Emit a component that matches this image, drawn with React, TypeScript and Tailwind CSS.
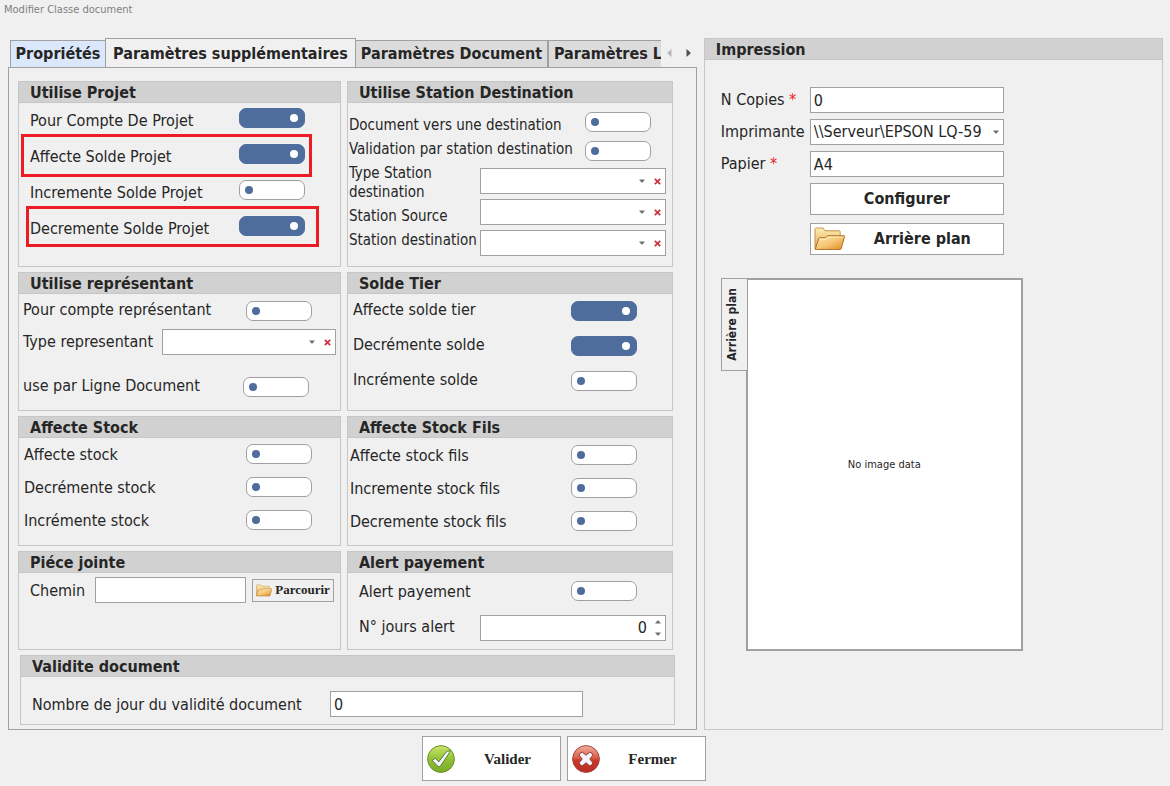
import { useId, useState } from 'react';
import type { ReactNode } from 'react';
import clsx from 'clsx';

type GroupProps = {
  title: string;
  className?: string;
  bodyClassName?: string;
  children: ReactNode;
};

function Group({ title, className, bodyClassName, children }: GroupProps) {
  return (
    <section className={clsx('flex min-w-0 flex-col border border-[#c6c6c6]', className)}>
      <h2 className="h-[21px] border-b border-[#c6c6c6] bg-[#d1d1d1] pl-[11px] text-base leading-[22px] font-bold whitespace-nowrap">
        {title}
      </h2>
      <div className={clsx('flex flex-1 flex-col', bodyClassName)}>{children}</div>
    </section>
  );
}

function Toggle({ id, on = false }: { id: string; on?: boolean }) {
  return (
    <input
      id={id}
      type="checkbox"
      role="switch"
      defaultChecked={on}
      className="flex h-5 w-[66px] shrink-0 appearance-none items-center rounded-[7px] border border-[#a0a0a0] bg-white px-[5px] before:size-2 before:rounded-full before:bg-[#4e6d9c] checked:justify-end checked:border-[#4e6d9c] checked:bg-[#4e6d9c] checked:px-[6px] checked:before:bg-white"
    />
  );
}

type ToggleRowProps = {
  label: string;
  on?: boolean;
  labelClassName?: string;
  marker?: string;
};

function ToggleRow({ label, on, labelClassName = 'pt-[2px]', marker }: ToggleRowProps) {
  const id = useId();
  return (
    <div className="relative flex h-5 items-center justify-between">
      <label htmlFor={id} className={clsx('whitespace-nowrap', labelClassName)}>
        {label}
      </label>
      <Toggle id={id} on={on} />
      {marker && (
        <span className={clsx('pointer-events-none absolute border-3 border-[#ed1c24]', marker)} />
      )}
    </div>
  );
}

function CaretDown() {
  return (
    <svg width="6" height="4" viewBox="0 0 6 4" className="pointer-events-none shrink-0 fill-[#6e6e6e]">
      <path d="M0 .5h6L3.5 3.5h-1z" />
    </svg>
  );
}

function CaretUp() {
  return (
    <svg width="6" height="4" viewBox="0 0 6 4" className="fill-[#6e6e6e]">
      <path d="M0 3.5h6L3.5.5h-1z" />
    </svg>
  );
}

function ClearableSelect({ id, className }: { id: string; className?: string }) {
  const [value, setValue] = useState('');
  return (
    <div className={clsx('flex h-[26px] items-center border border-[#a0a0a0] bg-white pr-[3px]', className)}>
      <select
        id={id}
        value={value}
        onChange={(e) => setValue(e.target.value)}
        className="h-full min-w-0 flex-1 appearance-none bg-transparent px-1 outline-none"
      >
        <option value="" />
      </select>
      <CaretDown />
      <button type="button" aria-label="Effacer" onClick={() => setValue('')} className="ml-2 p-px">
        <svg width="7" height="7" viewBox="0 0 7 7" className="stroke-[#d0303f] stroke-[1.7]">
          <path d="M.8.8l5.4 5.4M6.2.8L.8 6.2" />
        </svg>
      </button>
    </div>
  );
}

function TextBox({ id, value, className }: { id: string; value?: string; className?: string }) {
  return (
    <input
      id={id}
      type="text"
      defaultValue={value}
      className={clsx('h-[26px] border border-[#a0a0a0] bg-white px-[3px] outline-none', className)}
    />
  );
}

function FolderIcon({ className }: { className?: string }) {
  return (
    <svg viewBox="0 0 31 24" className={className}>
      <defs>
        <linearGradient id="folderBack" x1="0" y1="0" x2="0" y2="1">
          <stop offset="0" stopColor="#fdf0b4" />
          <stop offset="1" stopColor="#dfa24c" />
        </linearGradient>
        <linearGradient id="folderFront" x1="0" y1="0" x2="1" y2="1">
          <stop offset="0" stopColor="#fdeab0" />
          <stop offset=".5" stopColor="#f6c877" />
          <stop offset="1" stopColor="#dd8a1e" />
        </linearGradient>
      </defs>
      <path
        d="M1 22V2.2Q1 1 2.2 1H9l2 2.8h14.2q1 0 1 1V22z"
        fill="url(#folderBack)"
        stroke="#c8914a"
      />
      <path
        d="M1.2 22.4L4.8 11.6q.4-.9 1.3-.9h5.2l2.3-2h16.5q.7 0 .5.8l-3.4 12.1q-.3.9-1.2.9z"
        fill="url(#folderFront)"
        stroke="#b5722c"
      />
      <path d="M5.8 12.2h6l2.2-2h14.8" fill="none" stroke="#fff3cd" strokeWidth=".8" />
    </svg>
  );
}

function ValidIcon() {
  return (
    <svg viewBox="0 0 28 28" className="size-7 shrink-0">
      <defs>
        <linearGradient id="green" x1="0" y1="0" x2="0" y2="1">
          <stop offset="0" stopColor="#cbe66c" />
          <stop offset=".5" stopColor="#93c236" />
          <stop offset="1" stopColor="#79ab26" />
        </linearGradient>
      </defs>
      <circle cx="14" cy="14" r="13.4" fill="url(#green)" stroke="#6b8f2e" />
      <path
        d="M5.2 15.6l3-2.4 3.6 3.6 7.200-9.600q1.200-1.300 4-1.500-.5 2-1.800 3.900l-7.600 11.200q-1.300 1.800-2.800.3z"
        fill="#f1f4fb"
        stroke="#5d7a33"
        strokeLinejoin="round"
      />
    </svg>
  );
}

function CloseIcon() {
  return (
    <svg viewBox="0 0 28 28" className="size-7 shrink-0">
      <defs>
        <linearGradient id="red" x1="0" y1="0" x2="0" y2="1">
          <stop offset="0" stopColor="#f0b09e" />
          <stop offset=".45" stopColor="#d9604c" />
          <stop offset=".55" stopColor="#c93a2c" />
          <stop offset="1" stopColor="#b92a22" />
        </linearGradient>
      </defs>
      <circle cx="14" cy="14" r="13.4" fill="url(#red)" stroke="#a8483e" />
      <path
        d="M10.300 7.200l3.700 3 3.700-3q2.600.3 3.100 3.100L17.800 14l3 3.700q-.5 2.800-3.100 3.100l-3.700-3-3.700 3q-2.600-.3-3.100-3.100l3-3.700-3-3.700q.5-2.800 3.100-3.100z"
        fill="#f1f4fb"
        stroke="#9c3a34"
        strokeLinejoin="round"
      />
    </svg>
  );
}

function Tabs() {
  return (
    <div className="flex h-[29px] items-end pl-[2px] font-bold">
      <div role="tablist" className="-mb-px flex min-w-0 flex-1 items-end overflow-hidden whitespace-nowrap">
        <button
          type="button"
          role="tab"
          className="h-7 w-24 shrink-0 border border-[#a0a0a0] bg-[#dbe7fb]"
        >
          Propriétés
        </button>
        <button
          type="button"
          role="tab"
          aria-selected="true"
          className="-ml-px h-[30px] w-[251px] shrink-0 border border-b-0 border-[#a0a0a0] bg-[#f0f0f0]"
        >
          Paramètres supplémentaires
        </button>
        <button
          type="button"
          role="tab"
          className="-ml-px h-7 w-[193px] shrink-0 border border-[#a0a0a0] bg-[#dcdcdc]"
        >
          Paramètres Document
        </button>
        <button
          type="button"
          role="tab"
          className="h-7 min-w-0 flex-1 overflow-hidden border border-r-0 border-[#a0a0a0] bg-[#dcdcdc] pl-[5px] text-left"
        >
          Paramètres L
        </button>
      </div>
      <div className="flex h-full w-9 items-center justify-between px-[6px]">
        <button type="button" aria-label="Précédent">
          <svg width="5" height="8" viewBox="0 0 5 8" className="fill-[#b8b8b8]">
            <path d="M4.500 0v8L.5 4.500v-1z" />
          </svg>
        </button>
        <button type="button" aria-label="Suivant">
          <svg width="5" height="8" viewBox="0 0 5 8" className="fill-[#505050]">
            <path d="M.5 0v8l4-3.500v-1z" />
          </svg>
        </button>
      </div>
    </div>
  );
}

function StationGroup() {
  return (
    <Group title="Utilise Station Destination" className="min-h-[186px]" bodyClassName="pt-[9px] pr-[6px] pl-px">
      <div className="flex">
        <div className="flex min-w-0 flex-1 flex-col gap-[5px] pt-1 text-[15px] leading-[19px]">
          <label htmlFor="doc-dest" className="whitespace-nowrap">Document vers une destination</label>
          <label htmlFor="valid-dest" className="whitespace-nowrap">Validation par station destination</label>
          <label htmlFor="type-station">Type Station destination</label>
          <label htmlFor="station-source" className="whitespace-nowrap">Station Source</label>
          <label htmlFor="station-dest" className="whitespace-nowrap">Station destination</label>
        </div>
        <div className="flex w-[186px] flex-col gap-[5px]">
          <div className="mb-[2px] flex flex-col items-end gap-[9px] pr-[15px]">
            <Toggle id="doc-dest" />
            <Toggle id="valid-dest" />
          </div>
          <ClearableSelect id="type-station" />
          <ClearableSelect id="station-source" />
          <ClearableSelect id="station-dest" />
        </div>
      </div>
    </Group>
  );
}

function Impression() {
  return (
    <Group title="Impression" bodyClassName="pt-[27px] pl-4">
      <div className="grid grid-cols-[89px_194px] items-center gap-y-[6px]">
        <label htmlFor="copies">
          N Copies <span className="text-[#ed1c24]">*</span>
        </label>
        <TextBox id="copies" value="0" />
        <label htmlFor="printer">Imprimante</label>
        <div className="flex h-[26px] items-center border border-[#a0a0a0] bg-white pr-1">
          <select
            id="printer"
            className="h-full min-w-0 flex-1 appearance-none overflow-hidden bg-transparent pl-[3px] text-clip outline-none"
          >
            <option>{'\\\\Serveur\\EPSON LQ-59'}</option>
          </select>
          <CaretDown />
        </div>
        <label htmlFor="paper">
          Papier <span className="text-[#ed1c24]">*</span>
        </label>
        <TextBox id="paper" value="A4" />
        <button type="button" className="col-start-2 h-8 border border-[#a0a0a0] bg-white font-bold">
          Configurer
        </button>
        <button
          type="button"
          className="col-start-2 mt-[2px] flex h-8 items-center border border-[#a0a0a0] bg-white px-[3px] font-bold"
        >
          <FolderIcon className="h-6 w-[31px]" />
          <span className="flex-1 text-center">Arrière plan</span>
        </button>
      </div>

      {/* Background preview */}
      <div className="mt-[23px] flex items-start">
        <button
          type="button"
          className="z-10 flex h-[93px] w-[26px] items-center justify-center border border-r-0 border-[#a0a0a0] bg-[#f0f0f0] pr-1 text-xs font-bold"
        >
          <span className="rotate-180 [writing-mode:vertical-rl]">Arrière plan</span>
        </button>
        <div className="-ml-px flex h-[373px] w-[277px] items-center justify-center border-2 border-[#a0a0a0] bg-white text-[11px]">
          No image data
        </div>
      </div>
    </Group>
  );
}

export default function App() {
  return (
    <form
      className="flex min-h-screen flex-col bg-[#f0f0f0] font-['DejaVu_Sans_Condensed','Noto_Sans',sans-serif] text-base leading-5 text-[#262626]"
      onSubmit={(e) => e.preventDefault()}
    >
      <h1 className="h-[38px] px-1 text-[11px] text-[#808080]">Modifier Classe document</h1>

      <div className="grid grid-cols-[minmax(0,3fr)_minmax(0,2fr)] gap-[7px] pr-[7px] pl-2">
        <div className="flex min-w-0 flex-col">
          <Tabs />
          <div className="flex flex-col gap-[5px] border border-[#a0a0a0] pt-[13px] pr-[23px] pb-1 pl-[9px]">
            <div className="grid grid-cols-[minmax(0,323fr)_minmax(0,326fr)] gap-x-[6px] gap-y-[5px]">
              <Group title="Utilise Projet" className="min-h-[186px]" bodyClassName="gap-4 pt-[5px] pr-[35px] pl-[11px]">
                <ToggleRow label="Pour Compte De Projet" labelClassName="pt-[6px]" on />
                <ToggleRow
                  label="Affecte Solde Projet"
                  labelClassName="pt-[6px]"
                  on
                  marker="-top-[10px] -left-[9px] h-[43px] w-[291px]"
                />
                <ToggleRow label="Incremente Solde Projet" labelClassName="pt-[6px]" />
                <ToggleRow
                  label="Decremente Solde Projet"
                  labelClassName="pt-[6px]"
                  on
                  marker="-top-[10px] -left-[4px] h-[41px] w-[293px]"
                />
              </Group>

              <StationGroup />

              <Group title="Utilise représentant" className="min-h-[139px]" bodyClassName="pt-[7px] pl-1">
                <div className="pr-7">
                  <ToggleRow label="Pour compte représentant" labelClassName="pb-[2px]" />
                </div>
                <div className="mt-2 mb-[22px] flex items-center justify-between pr-1">
                  <label htmlFor="type-rep">Type representant</label>
                  <ClearableSelect id="type-rep" className="w-[174px]" />
                </div>
                <div className="pr-[31px]">
                  <ToggleRow label="use par Ligne Document" labelClassName="pb-[2px]" />
                </div>
              </Group>

              <Group title="Solde Tier" className="min-h-[139px]" bodyClassName="gap-[15px] pt-[7px] pr-[35px] pl-[5px]">
                <ToggleRow label="Affecte solde tier" labelClassName="pb-[2px]" on />
                <ToggleRow label="Decrémente solde" labelClassName="pb-[2px]" on />
                <ToggleRow label="Incrémente solde" labelClassName="pb-[2px]" />
              </Group>

              <Group title="Affecte Stock" className="min-h-[130px]" bodyClassName="gap-[13px] pt-[6px] pr-7 pl-[5px]">
                <ToggleRow label="Affecte stock" />
                <ToggleRow label="Decrémente stock" />
                <ToggleRow label="Incrémente stock" />
              </Group>

              <Group title="Affecte Stock Fils" className="min-h-[130px]" bodyClassName="gap-[13px] pt-[7px] pr-[35px] pl-[2px]">
                <ToggleRow label="Affecte stock fils" />
                <ToggleRow label="Incremente stock fils" />
                <ToggleRow label="Decremente stock fils" />
              </Group>

              <Group title="Piéce jointe" className="min-h-[99px]" bodyClassName="pt-1 pr-[6px] pl-[11px]">
                <div className="flex items-center gap-[6px]">
                  <label htmlFor="path" className="w-[59px] pt-[2px]">Chemin</label>
                  <TextBox id="path" className="min-w-0 flex-1" />
                  <button
                    type="button"
                    className="flex h-[23px] w-[82px] items-center justify-between border border-[#a0a0a0] px-[3px] font-['Liberation_Serif',serif] text-[13px] font-bold"
                  >
                    <FolderIcon className="h-[13px] w-4" />
                    Parcourir
                  </button>
                </div>
              </Group>

              <Group title="Alert payement" className="min-h-[99px]" bodyClassName="gap-[14px] pt-2 pl-[11px]">
                <div className="pr-[35px]">
                  <ToggleRow label="Alert payement" />
                </div>
                <div className="flex items-center justify-between pr-[6px]">
                  <label htmlFor="days-alert" className="pb-[2px]">N° jours alert</label>
                  <div className="flex h-[26px] w-[186px] items-center border border-[#a0a0a0] bg-white pr-1">
                    <input
                      id="days-alert"
                      type="text"
                      inputMode="numeric"
                      defaultValue="0"
                      className="min-w-0 flex-1 pr-2 text-right outline-none"
                    />
                    <div className="flex flex-col gap-2">
                      <button type="button" aria-label="Augmenter"><CaretUp /></button>
                      <button type="button" aria-label="Diminuer"><CaretDown /></button>
                    </div>
                  </div>
                </div>
              </Group>
            </div>

            <Group title="Validite document" className="-mr-[2px] ml-[2px]" bodyClassName="pt-[14px] pb-[7px] pl-[11px]">
              <div className="flex items-center">
                <label htmlFor="validity" className="w-[298px] pt-[2px]">Nombre de jour du validité document</label>
                <TextBox id="validity" value="0" className="w-[253px]" />
              </div>
            </Group>
          </div>
        </div>

        <Impression />
      </div>

      <div className="flex justify-center gap-[6px] pt-[6px] pr-[42px] pb-[5px] font-['Liberation_Serif',serif] text-[15px] font-bold">
        <button type="submit" className="flex h-[45px] w-[139px] items-center border border-[#a0a0a0] bg-white pl-1">
          <ValidIcon />
          <span className="flex-1 text-center">Valider</span>
        </button>
        <button type="button" className="flex h-[45px] w-[139px] items-center border border-[#a0a0a0] bg-white pl-1">
          <CloseIcon />
          <span className="flex-1 text-center">Fermer</span>
        </button>
      </div>
    </form>
  );
}
